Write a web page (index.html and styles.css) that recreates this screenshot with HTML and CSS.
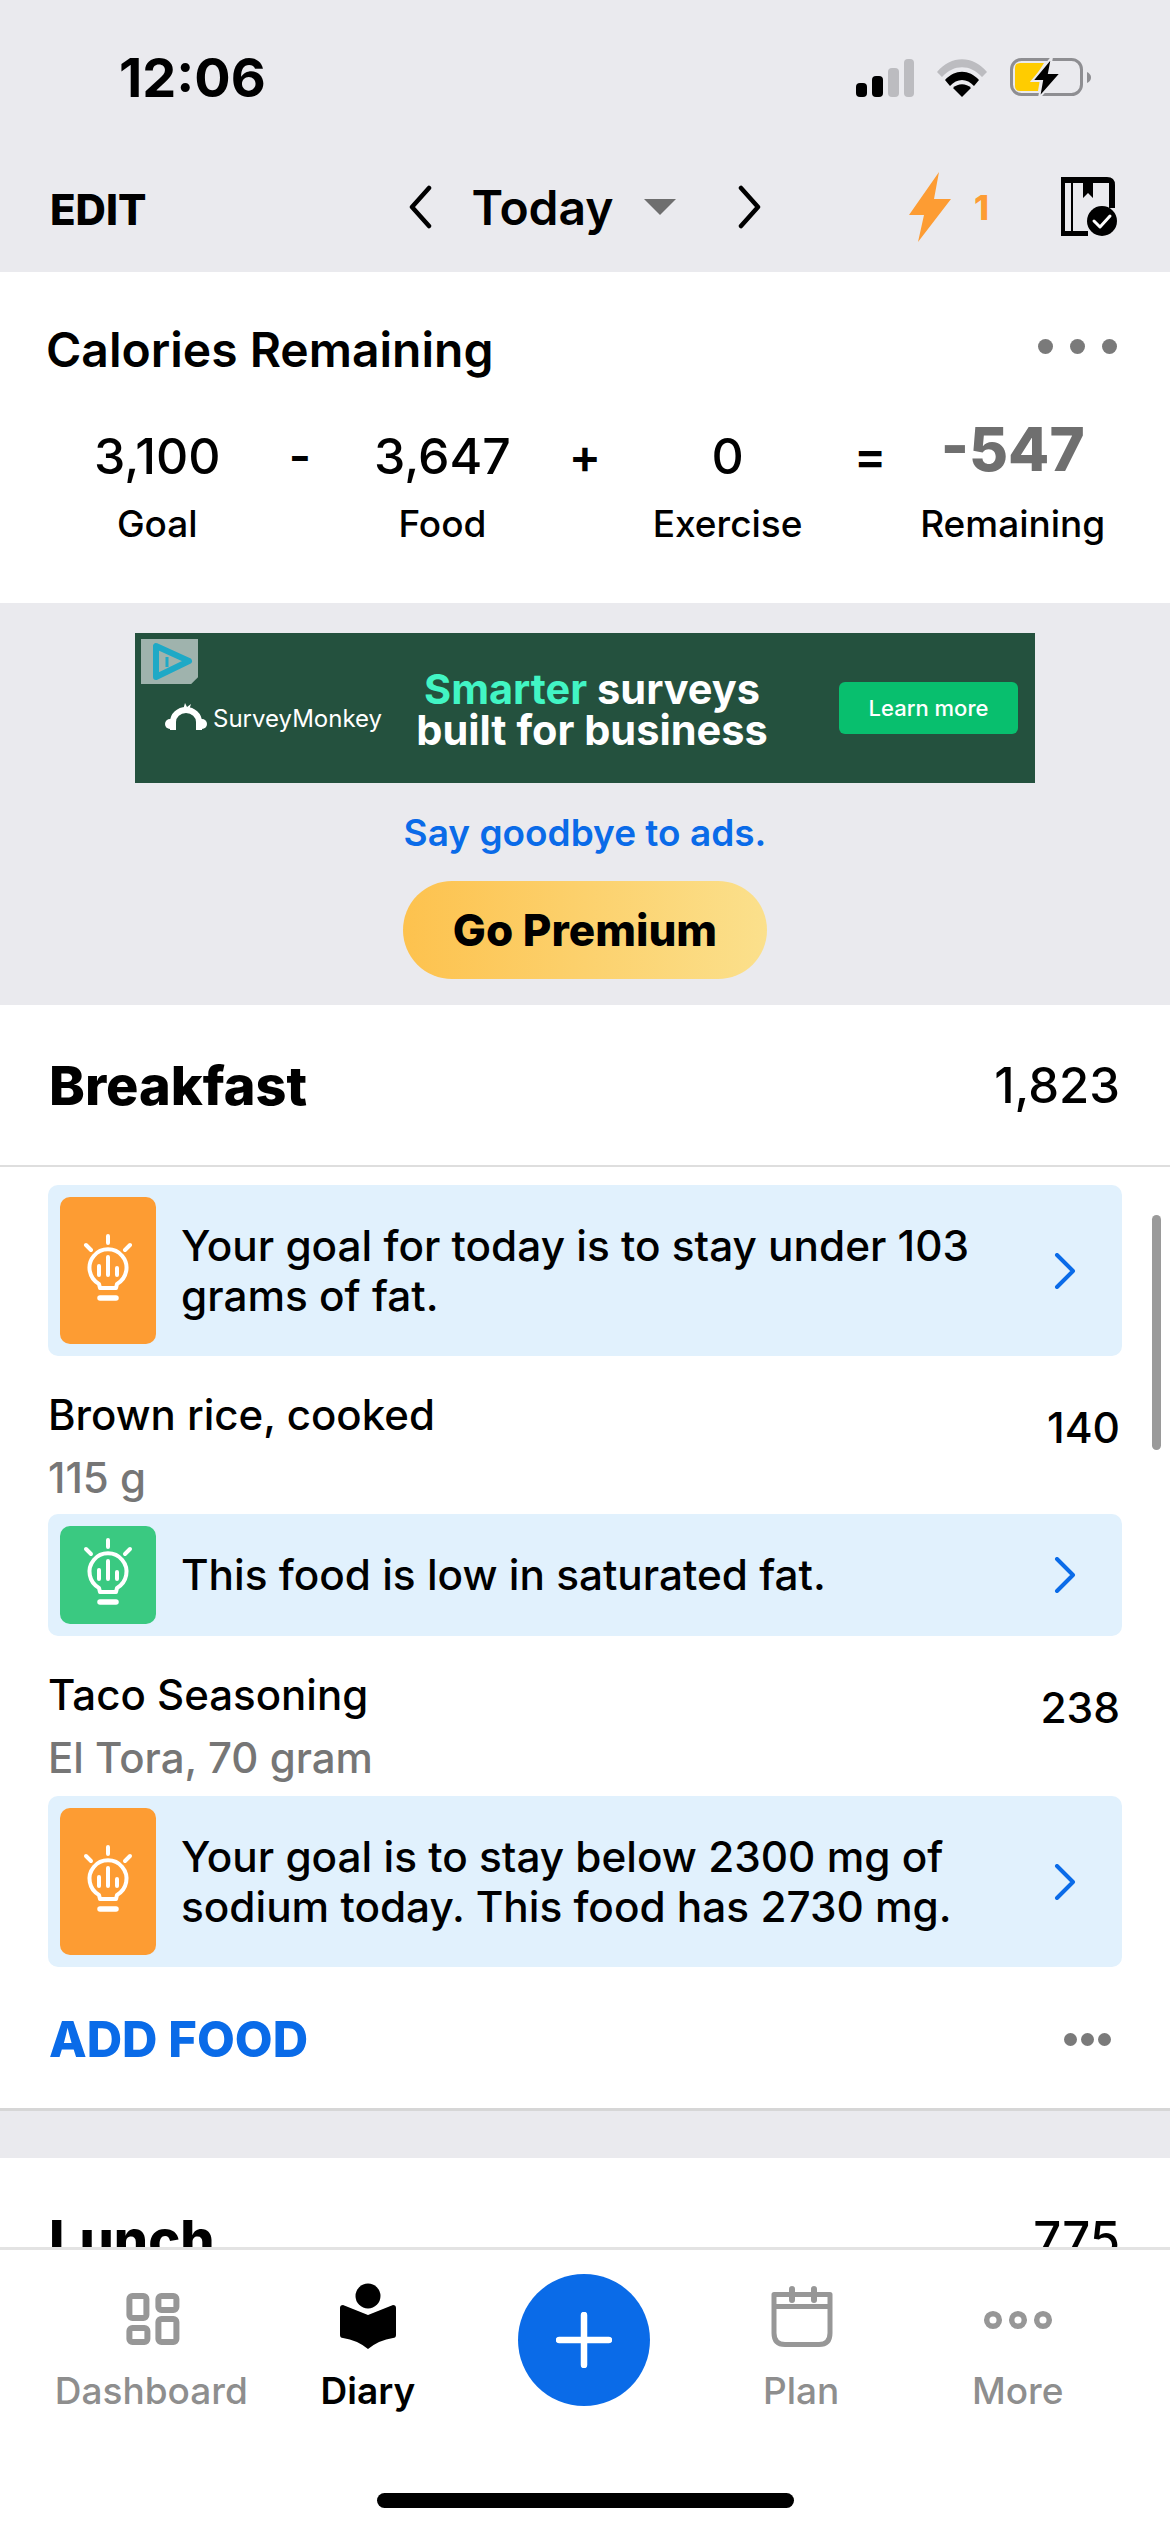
FILE: index.html
```html
<!DOCTYPE html>
<html lang="en">
<head>
<meta charset="utf-8">
<title>Diary</title>
<link rel="stylesheet" href="styles.css">
</head>
<body>
<svg class="defs" width="0" height="0" aria-hidden="true">
  <defs>
    <g id="bulb" fill="none" stroke="#fff" stroke-linecap="round" stroke-linejoin="round">
      <path stroke-width="4" d="M21 51A18.5 18.5 0 1 1 39 51L38 55H22Z"/>
      <path stroke-width="4" d="M30 3V10M8 12L13 17M52 12L47 17M21 33V42M30 24V42M39 35V42"/>
      <path stroke-width="5.500" d="M22 65H38"/>
    </g>
  </defs>
</svg>
<div class="top">
  <div class="status">
    <span class="time">12:06</span>
    <div class="status-icons">
      <svg class="sig" width="58" height="38" viewBox="0 0 58 38"><rect x="0" y="24" width="11" height="14" rx="4" fill="#000"/><rect x="16" y="17" width="11" height="21" rx="4" fill="#000"/><rect x="32" y="9" width="11" height="29" rx="4" fill="#bcbcc0"/><rect x="48" y="0" width="10" height="38" rx="4" fill="#bcbcc0"/></svg>
      <svg class="wifi" width="50" height="38" viewBox="0 0 50 38"><path d="M0 13C14 -4 36 -4 50 13L45 18C33 5 17 5 5 18Z" fill="#bcbcc0"/><path d="M8 21C18 10 32 10 42 21L37 27C30 19 20 19 13 27Z" fill="#000"/><path d="M16 29C21 24 29 24 34 29L25 38Z" fill="#000"/></svg>
      <svg class="batt" width="84" height="44" viewBox="0 0 84 44"><rect x="1.500" y="2.500" width="70" height="35" rx="10" fill="none" stroke="#8e8e92" stroke-width="3"/><path d="M5 11Q5 6 10 6H34L24 22H30L28 34H10Q5 34 5 29Z" fill="#ffcc00"/><path d="M77 15Q81 17 81 20.500Q81 24 77 26Z" fill="#8e8e92"/><path d="M42 0L22 24H32L29 41L51 16H39Z" fill="#000" stroke="#eaeaee" stroke-width="2"/></svg>
    </div>
  </div>
  <div class="nav">
    <span class="edit">EDIT</span>
    <div class="date">
      <svg class="chev-l" width="24" height="44" viewBox="0 0 24 44"><path d="M21 3L4 22L21 41" fill="none" stroke="#000" stroke-width="4.500" stroke-linecap="round" stroke-linejoin="round"/></svg>
      <span class="today">Today</span>
      <svg class="caret" width="32" height="16" viewBox="0 0 32 16"><path d="M0 0H32L16 16Z" fill="#6e6e6e"/></svg>
      <svg class="chev-r" width="24" height="44" viewBox="0 0 24 44"><path d="M3 3L20 22L3 41" fill="none" stroke="#000" stroke-width="4.500" stroke-linecap="round" stroke-linejoin="round"/></svg>
    </div>
    <div class="nav-right">
      <svg width="42" height="70" viewBox="0 0 42 70"><path d="M30 0L0 43H15L9 70L42 27H25Z" fill="#fd9c33"/></svg>
      <span class="streak">1</span>
      <svg class="book" width="56" height="60" viewBox="0 0 56 60"><path fill-rule="evenodd" d="M0 0H46Q54 0 54 8V31H48V6H32V21L27 16L22 21V6H12V54H27V59H0ZM4 6V54H10V6Z"/><circle cx="41" cy="44" r="15"/><path d="M33 44L39 50L49 39" fill="none" stroke="#fff" stroke-width="3" stroke-linecap="round" stroke-linejoin="round"/></svg>
    </div>
  </div>
</div>

<section class="cal">
  <div class="cal-head">
    <h2>Calories Remaining</h2>
    <div class="dots"><i></i><i></i><i></i></div>
  </div>
  <div class="cal-grid">
    <div class="num">3,100</div><div class="op">-</div><div class="num">3,647</div><div class="op">+</div><div class="num">0</div><div class="op">=</div><div class="num rem">-547</div>
    <div class="lab">Goal</div><div></div><div class="lab">Food</div><div></div><div class="lab">Exercise</div><div></div><div class="lab">Remaining</div>
  </div>
</section>

<section class="promo">
  <div class="ad">
    <div class="adchoice"><svg width="57" height="45" viewBox="0 0 57 45"><path d="M15 7V38L48 22Z" fill="none" stroke="#1fa9c6" stroke-width="6" stroke-linejoin="round"/><path d="M26 18V28" stroke="#1fa9c6" stroke-width="3"/></svg></div>
    <div class="brand">
      <svg width="42" height="30" viewBox="0 0 42 30"><g fill="#fff"><circle cx="5" cy="21" r="5"/><circle cx="37" cy="21" r="5"/><path d="M20 0L22 4L26 1L24 7H18Z"/></g><path d="M8 27V19A13 12 0 0 1 34 19V27" fill="none" stroke="#fff" stroke-width="6"/></svg>
      <span>SurveyMonkey</span>
    </div>
    <div class="headline"><span class="hl">Smarter</span> surveys<br>built for business</div>
    <div class="learn">Learn more</div>
  </div>
  <div class="bye">Say goodbye to ads.</div>
  <div class="premium">Go Premium</div>
</section>

<main class="list">
  <section class="meal">
    <div class="meal-head"><h3>Breakfast</h3><span class="meal-cal">1,823</span></div>
    <div class="tip tip-two">
      <div class="tip-ic orange"><svg width="60" height="76" viewBox="0 0 60 76"><use href="#bulb"/></svg></div>
      <p>Your goal for today is to stay under 103 grams of fat.</p>
      <svg class="chev" width="22" height="36" viewBox="0 0 22 36"><path d="M3 2L19 18L3 34" fill="none" stroke="#0a6be8" stroke-width="4" stroke-linecap="round" stroke-linejoin="round"/></svg>
    </div>
    <div class="food">
      <div><div class="fname">Brown rice, cooked</div><div class="fsub">115 g</div></div>
      <span class="fcal">140</span>
    </div>
    <div class="tip tip-one">
      <div class="tip-ic green"><svg width="60" height="76" viewBox="0 0 60 76"><use href="#bulb"/></svg></div>
      <p>This food is low in saturated fat.</p>
      <svg class="chev" width="22" height="36" viewBox="0 0 22 36"><path d="M3 2L19 18L3 34" fill="none" stroke="#0a6be8" stroke-width="4" stroke-linecap="round" stroke-linejoin="round"/></svg>
    </div>
    <div class="food food-tall">
      <div><div class="fname">Taco Seasoning</div><div class="fsub">El Tora, 70 gram</div></div>
      <span class="fcal">238</span>
    </div>
    <div class="tip tip-two">
      <div class="tip-ic orange"><svg width="60" height="76" viewBox="0 0 60 76"><use href="#bulb"/></svg></div>
      <p>Your goal is to stay below 2300 mg of sodium today. This food has 2730 mg.</p>
      <svg class="chev" width="22" height="36" viewBox="0 0 22 36"><path d="M3 2L19 18L3 34" fill="none" stroke="#0a6be8" stroke-width="4" stroke-linecap="round" stroke-linejoin="round"/></svg>
    </div>
    <div class="meal-foot"><span class="add">ADD FOOD</span><div class="mini"><i></i><i></i><i></i></div></div>
  </section>
  <section class="meal lunch">
    <div class="meal-head"><h3>Lunch</h3><span class="meal-cal">775</span></div>
  </section>
  <div class="scroll"></div>
</main>

<nav class="tabs">
  <div class="tab">
    <svg width="58" height="68" viewBox="0 0 58 68" fill="none" stroke="#979797" stroke-width="6"><rect x="7.400" y="13" width="17" height="22" rx="3"/><rect x="36.400" y="13" width="18" height="14" rx="3"/><rect x="7.400" y="45" width="18" height="14" rx="3"/><rect x="36.400" y="36" width="18" height="23" rx="3"/></svg>
    <span>Dashboard</span>
  </div>
  <div class="tab on">
    <svg width="58" height="68" viewBox="0 0 58 68"><circle cx="29" cy="13" r="12.500"/><path d="M4 22L29 32L54 22Q57 22 57 25V52Q57 55 54 55Q40 57 29 66Q18 57 4 55Q1 55 1 52V25Q1 22 4 22Z"/></svg>
    <span>Diary</span>
  </div>
  <div class="fab"><svg width="56" height="56" viewBox="0 0 56 56"><path d="M28 3V53M3 28H53" stroke="#fff" stroke-width="6.500" stroke-linecap="round"/></svg></div>
  <div class="tab">
    <svg width="64" height="68" viewBox="0 0 64 68" fill="none" stroke="#979797" stroke-width="5"><path d="M5 11.500H61V50Q61 61.500 50 61.500H16Q5 61.500 5 50Z" stroke-linejoin="round"/><path d="M5 23.500H61"/><path d="M23 6V17M45 6V17" stroke-width="6" stroke-linecap="round"/></svg>
    <span>Plan</span>
  </div>
  <div class="tab">
    <svg width="72" height="68" viewBox="0 0 72 68" fill="none" stroke="#979797" stroke-width="5.500"><circle cx="11" cy="37" r="6.300"/><circle cx="36" cy="37" r="6.300"/><circle cx="61" cy="37" r="6.300"/></svg>
    <span>More</span>
  </div>
</nav>
<div class="home"><div class="bar"></div></div>
</body>
</html>
```
FILE: styles.css
```css
* { box-sizing: border-box; }
html, body { margin: 0; padding: 0; }
body {
  width: 1170px;
  height: 2532px;
  overflow: hidden;
  display: flex;
  flex-direction: column;
  background: #fff;
  color: #000;
  font-family: Inter, "Liberation Sans", sans-serif;
}
.defs { position: absolute; }
h2, h3, p { margin: 0; }

.top { height: 272px; background: #eaeaee; flex: none; }
.status { height: 140px; display: flex; justify-content: space-between; padding: 56px 76px 0 119px; }
.time { font-size: 54px; font-weight: 700; line-height: 44px; }
.status-icons { display: flex; align-items: flex-start; height: 44px; }
.sig { margin-top: 3px; }
.wifi { margin: 3px 0 0 23px; }
.batt { margin: 1px 0 0 23px; }
.nav { height: 132px; display: grid; grid-template-columns: 1fr auto 1fr; align-items: center; padding: 2px 50px 0; }
.edit { font-size: 42px; font-weight: 800; padding-top: 4px; }
.date { display: flex; align-items: center; }
.today { font-size: 48px; font-weight: 600; margin: 0 30px 0 39px; }
.caret { margin-right: 62px; }
.nav-right { display: flex; justify-content: flex-end; align-items: center; padding-right: 3px; }
.streak { font-size: 34px; font-weight: 800; color: #fd9c33; margin: 0 72px 0 23px; }

.cal { height: 331px; flex: none; background: #fff; padding: 50px 53px 0 46px; }
.cal-head { display: flex; justify-content: space-between; align-items: flex-start; }
.cal-head h2 { font-size: 48px; font-weight: 600; line-height: 56px; }
.dots { display: flex; gap: 17px; padding-top: 17px; }
.dots i { width: 15px; height: 15px; border-radius: 50%; background: #7a7a7a; }
.cal-grid { display: grid; grid-template-columns: repeat(7, minmax(0, 1fr)); margin: 43px 33px 0 40px; justify-items: center; align-items: center; }
.num { font-size: 50px; font-weight: 500; line-height: 70px; white-space: nowrap; }
.op { font-size: 48px; font-weight: 600; line-height: 70px; }
.rem { font-size: 60px; font-weight: 800; color: #6f6f6f; line-height: 56px; margin-bottom: 14px; }
.lab { font-size: 37px; font-weight: 500; line-height: 50px; white-space: nowrap; margin-top: 8px; }

.promo { height: 402px; flex: none; background: #eaeaee; display: flex; flex-direction: column; align-items: center; padding-top: 30px; }
.ad { width: 900px; height: 150px; background: #24513e; position: relative; display: flex; align-items: center; flex: none; }
.adchoice { position: absolute; left: 6px; top: 6px; width: 57px; height: 45px; background: #9fb3ad; clip-path: polygon(0 0, 100% 0, 100% 85%, 88% 100%, 0 100%); }
.adchoice svg { display: block; }
.brand { display: flex; align-items: center; gap: 6px; color: #fff; font-size: 24px; margin: 20px 0 0 30px; width: 237px; }
.headline { color: #fff; font-weight: 700; font-size: 41.500px; line-height: 41px; width: 380px; text-align: center; padding-top: 3px; white-space: nowrap; }
.hl { color: #42f5c4; }
.learn { background: #08bf6e; color: #fff; width: 179px; height: 52px; border-radius: 6px; font-size: 22px; font-weight: 500; display: flex; align-items: center; justify-content: center; margin: 0 17px 0 auto; }
.bye { color: #0a6be8; font-size: 37px; font-weight: 600; line-height: 50px; margin-top: 25px; }
.premium { width: 364px; height: 98px; border-radius: 49px; margin-top: 23px; background: linear-gradient(90deg, #fdc24e, #fbe08c); font-size: 44px; font-weight: 800; display: flex; align-items: center; justify-content: center; }

.list { flex: 1; min-height: 0; overflow: hidden; position: relative; background: #eaeaee; }
.meal { background: #fff; }
.meal-head { height: 162px; display: flex; justify-content: space-between; align-items: center; padding: 0 50px 0 49px; border-bottom: 2px solid #dedede; }
.meal-head h3 { font-size: 54px; font-weight: 800; }
.meal-cal { font-size: 49px; font-weight: 500; }
.tip { margin: 0 48px; background: #e1f1fd; border-radius: 10px; display: flex; align-items: center; padding: 12px 46px 12px 12px; }
.tip-two { height: 171px; }
.tip-one { height: 122px; }
.tip-ic { width: 96px; align-self: stretch; border-radius: 10px; display: flex; align-items: center; justify-content: center; flex: none; }
.orange { background: #fd9c33; }
.green { background: #3ac981; }
.tip p { flex: 1; font-size: 42.300px; font-weight: 500; line-height: 50px; padding: 0 30px 0 25px; }
.chev { flex: none; }
.meal-head + .tip { margin-top: 18px; }
.food { height: 158px; display: flex; justify-content: space-between; align-items: flex-start; padding: 31px 50px 0 48px; }
.food-tall { height: 160px; }
.fname { font-size: 42px; font-weight: 500; line-height: 56px; }
.fsub { font-size: 42px; font-weight: 500; line-height: 50px; color: #767676; margin-top: 10px; }
.fcal { font-size: 42.500px; font-weight: 500; line-height: 56px; margin-top: 13px; }
.meal-foot { height: 144px; display: flex; justify-content: space-between; align-items: center; padding: 3px 59px 0 49px; border-bottom: 3px solid #d6d6d6; }
.add { color: #0a6be8; font-size: 49px; font-weight: 800; }
.mini { display: flex; gap: 4px; }
.mini i { width: 13px; height: 13px; border-radius: 50%; background: #7a7a7a; }
.lunch { margin-top: 47px; }
.lunch .meal-head { border: 0; }
.scroll { position: absolute; right: 9px; top: 210px; width: 9px; height: 235px; border-radius: 5px; background: #9a9a9a; }

.tabs { height: 190px; flex: none; background: #fff; border-top: 3px solid #e3e3e3; display: grid; grid-template-columns: repeat(5, 216.600px); padding-left: 43px; }
.tab { display: flex; flex-direction: column; align-items: center; font-size: 37px; font-weight: 500; color: #8e8e8e; height: 187px; }
.tab svg { margin-top: 33px; }
.tab span { margin-top: 15px; line-height: 50px; }
.on { color: #000; font-weight: 600; }
.fab { width: 132px; height: 132px; margin: 24px 0 0 42px; border-radius: 50%; background: #0a6be8; display: flex; align-items: center; justify-content: center; }
.home { height: 95px; flex: none; display: flex; justify-content: center; padding-top: 56px; background: #fff; }
.bar { width: 417px; height: 15px; border-radius: 8px; background: #000; }
```
